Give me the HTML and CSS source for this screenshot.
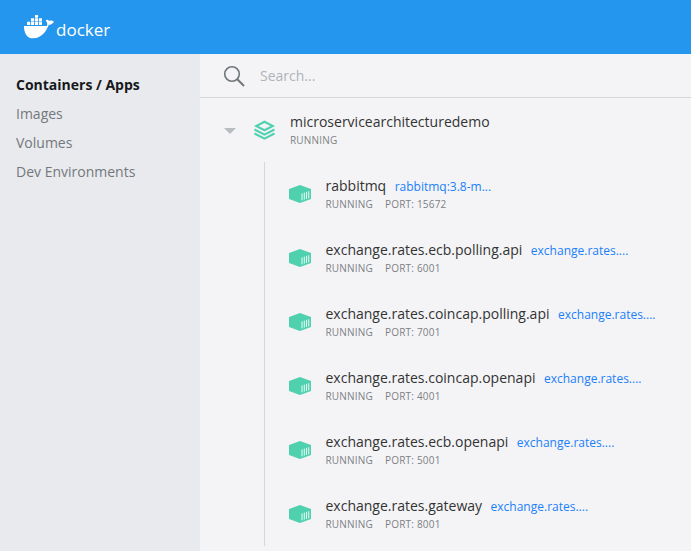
FILE: index.html
```html
<!DOCTYPE html>
<html lang="en">

<head>
    <meta charset="UTF-8">
    <title>Docker Desktop</title>
    <link rel="stylesheet" href="styles.css">
</head>

<body>
    <svg class="defs" width="0" height="0">
        <symbol id="box" viewBox="0 0 22 18">
            <path fill="#4fd1b0" d="M11 0l11 4v10l-11 4-11-4V4z"/>
            <path fill="#eafaf5" d="M12.5 8.5l1-.3v7l-1 .3zM14.8 7.8l1-.3v7l-1 .3zM17 7.1l1-.3v7l-1 .3zM19.2 6.4l1-.3v7l-1 .3z"/>
        </symbol>
    </svg>
    <header class="topbar">
        <svg class="whale" viewBox="0 0 30 23" width="31" height="24">
            <path fill="#fff" d="M0 10.5h22.2c.6-1.4.4-3.4-.8-4.6l-.5-.5.7-.5c1-.7 2-.2 2.6.7 1.300-.6 3.400-.4 4.800.700-1 2-3 3-5 3C22 15 17 22.500 9 22.500 2.500 22.500 0 17 0 10.500z"/>
            <path fill="#fff" d="M3 6.500h3v3H3zM6.800 6.500h3v3h-3zM10.600 6.500h3v3h-3zM14.400 6.500h3v3h-3zM6.800 3h3v3h-3zM10.600 3h3v3h-3zM14.400 3h3v3h-3zM10.600-.500h3v3h-3z"/>
        </svg>
        <span class="wordmark">docker</span>
    </header>
    <div class="app">
        <nav class="sidebar">
            <a class="nav-item active">Containers / Apps</a>
            <a class="nav-item">Images</a>
            <a class="nav-item">Volumes</a>
            <a class="nav-item">Dev Environments</a>
        </nav>
        <main class="content">
            <div class="search">
                <svg viewBox="0 0 22 22" width="22" height="22">
                    <circle cx="9" cy="9" r="7.300" fill="none" stroke="#707578" stroke-width="1.600"/>
                    <path d="M14.300 14.300l6.700 6.700" stroke="#707578" stroke-width="2" fill="none"/>
                </svg>
                <span class="search-text">Search...</span>
            </div>
            <div class="group">
                <span class="caret"></span>
                <svg class="stack" viewBox="0 0 22 20" width="23" height="20">
                    <path fill="#4fd1b0" d="M11 .500l10.500 5.500L11 11.500.500 6zM11 3L5 6l6 3 6-3z"/>
                    <path fill="none" stroke="#4fd1b0" stroke-width="2" d="M1 9.500l10 5.200 10-5.200M1 13.500l10 5.200 10-5.200"/>
                </svg>
                <div>
                    <div class="name">microservicearchitecturedemo</div>
                    <div class="meta"><span>RUNNING</span></div>
                </div>
            </div>
            <ul class="services">
                <li class="service">
                    <svg class="box" width="22" height="18"><use href="#box"/></svg>
                    <div>
                        <div class="title"><span class="name">rabbitmq</span><a class="image">rabbitmq:3.8-m...</a></div>
                        <div class="meta"><span>RUNNING</span><span>PORT: 15672</span></div>
                    </div>
                </li>
                <li class="service">
                    <svg class="box" width="22" height="18"><use href="#box"/></svg>
                    <div>
                        <div class="title"><span class="name">exchange.rates.ecb.polling.api</span><a class="image">exchange.rates....</a></div>
                        <div class="meta"><span>RUNNING</span><span>PORT: 6001</span></div>
                    </div>
                </li>
                <li class="service">
                    <svg class="box" width="22" height="18"><use href="#box"/></svg>
                    <div>
                        <div class="title"><span class="name">exchange.rates.coincap.polling.api</span><a class="image">exchange.rates....</a></div>
                        <div class="meta"><span>RUNNING</span><span>PORT: 7001</span></div>
                    </div>
                </li>
                <li class="service">
                    <svg class="box" width="22" height="18"><use href="#box"/></svg>
                    <div>
                        <div class="title"><span class="name">exchange.rates.coincap.openapi</span><a class="image">exchange.rates....</a></div>
                        <div class="meta"><span>RUNNING</span><span>PORT: 4001</span></div>
                    </div>
                </li>
                <li class="service">
                    <svg class="box" width="22" height="18"><use href="#box"/></svg>
                    <div>
                        <div class="title"><span class="name">exchange.rates.ecb.openapi</span><a class="image">exchange.rates....</a></div>
                        <div class="meta"><span>RUNNING</span><span>PORT: 5001</span></div>
                    </div>
                </li>
                <li class="service">
                    <svg class="box" width="22" height="18"><use href="#box"/></svg>
                    <div>
                        <div class="title"><span class="name">exchange.rates.gateway</span><a class="image">exchange.rates....</a></div>
                        <div class="meta"><span>RUNNING</span><span>PORT: 8001</span></div>
                    </div>
                </li>
            </ul>
        </main>
    </div>
</body>

</html>
```

FILE: styles.css
```css
html, body {
    height: 100%;
}

body {
    margin: 0;
    display: flex;
    flex-direction: column;
    overflow: hidden;
    font-family: "Open Sans", "Liberation Sans", sans-serif;
    background: #f4f4f6;
    color: #333;
}

.defs {
    display: none;
}

.topbar {
    flex: none;
    height: 54px;
    box-sizing: border-box;
    padding: 15px 0 0 24px;
    display: flex;
    align-items: flex-start;
    gap: 1px;
    background: #2496ed;
}

.wordmark {
    color: #fff;
    font-size: 17px;
    line-height: 29px;
}

.app {
    flex: 1;
    display: flex;
    min-height: 0;
}

.sidebar {
    flex: none;
    width: 200px;
    box-sizing: border-box;
    padding-top: 16px;
    background: #e9eaee;
}

.nav-item {
    display: block;
    padding-left: 16px;
    font-size: 14px;
    line-height: 29px;
    color: #73787c;
}

.nav-item.active {
    font-weight: 700;
    color: #17191b;
}

.content {
    flex: 1;
    min-width: 0;
}

.search {
    height: 44px;
    box-sizing: border-box;
    border-bottom: 1px solid #d5d7d9;
    padding-left: 23px;
    display: flex;
    align-items: center;
    gap: 15px;
}

.search-text {
    font-size: 14px;
    color: #b0b3b6;
}

.group {
    display: flex;
    align-items: center;
    height: 64px;
    padding-left: 24px;
}

.caret {
    width: 0;
    height: 0;
    margin-top: 2px;
    border-left: 6px solid transparent;
    border-right: 6px solid transparent;
    border-top: 6px solid #b9bcbf;
}

.stack {
    margin: 0 14.500px 0 16.500px;
}

.name {
    font-size: 14px;
    line-height: 19px;
    color: #333;
}

.meta {
    display: flex;
    gap: 12px;
    margin-top: 1px;
    font-size: 10px;
    line-height: 16px;
    letter-spacing: .2px;
    color: #7c8185;
}

.services {
    list-style: none;
    margin: 0 0 0 64px;
    padding: 0 0 0 24px;
    height: 384px;
    border-left: 1px solid #d5d7d9;
}

.service {
    height: 64px;
    display: flex;
    align-items: center;
    gap: 14.500px;
}

.title {
    display: flex;
    gap: 8.500px;
    align-items: baseline;
}

.image {
    font-size: 12px;
    color: #1a80fa;
}
```
